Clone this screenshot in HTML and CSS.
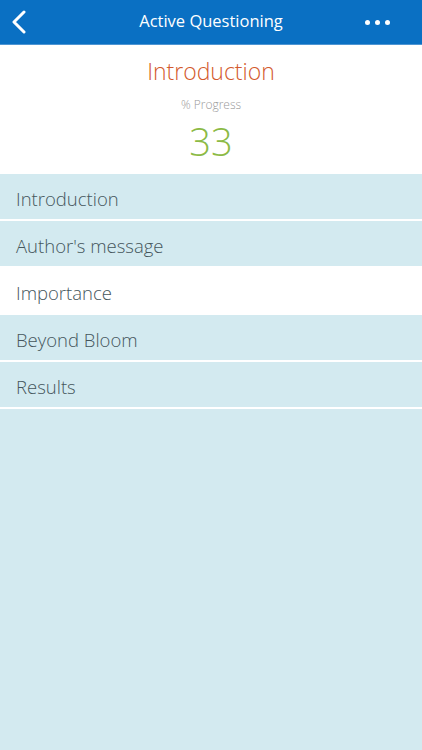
FILE: index.html
```html
<!DOCTYPE html>
<html>
<head>
<meta charset="utf-8">
<link rel="stylesheet" href="styles.css">
</head>
<body>
<div class="app">
  <header class="topbar">
    <div class="back">
      <svg width="16" height="24" viewBox="0 0 16 24"><path d="M13 2 L3 12 L13 22" fill="none" stroke="#fff" stroke-width="3" stroke-linecap="round" stroke-linejoin="round"/></svg>
    </div>
    <div class="title">Active Questioning</div>
    <div class="more"><span class="dot"></span><span class="dot"></span><span class="dot"></span></div>
  </header>
  <section class="summary">
    <div class="sum-title">Introduction</div>
    <div class="sum-label">% Progress</div>
    <div class="sum-value">33</div>
  </section>
  <ul class="list">
    <li class="item">Introduction</li>
    <li class="item">Author's message</li>
    <li class="item active">Importance</li>
    <li class="item">Beyond Bloom</li>
    <li class="item">Results</li>
  </ul>
</div>
</body>
</html>
```
FILE: styles.css
```css
* { box-sizing: border-box; }
html, body { margin: 0; padding: 0; }
body {
  width: 422px;
  height: 750px;
  background: #d3eaf0;
  font-family: "Open Sans", "Liberation Sans", sans-serif;
  overflow: hidden;
}
.app { display: flex; flex-direction: column; }
.topbar {
  height: 45px;
  background: #0a70c3;
  border-bottom: 1px solid #4e95d3;
  display: flex;
  align-items: center;
  justify-content: space-between;
  padding: 0 32px 0 11px;
  position: relative;
}
.back { display: flex; align-items: center; width: 16px; height: 24px; margin-top: -1px; }
.title {
  color: #fff;
  font-size: 16.5px;
  font-weight: 400;
  position: absolute;
  left: 0; right: 0;
  text-align: center;
  top: 9px;
  pointer-events: none;
}
.more { display: flex; gap: 5px; margin-top: 1px; }
.dot { width: 5px; height: 5px; border-radius: 50%; background: #fff; display: block; }
.summary {
  background: #fff;
  height: 129px;
  display: flex;
  flex-direction: column;
  align-items: center;
  padding-top: 10px;
}
.sum-title {
  color: #d35a2d;
  font-size: 23px;
  font-weight: 300;
  line-height: 32px;
}
.sum-label {
  color: #9a9a9a;
  font-size: 12px;
  font-weight: 300;
  line-height: 16px;
  margin-top: 10px;
}
.sum-value {
  color: #8cba45;
  font-size: 38px;
  font-weight: 300;
  line-height: 40px;
  margin-top: 8px;
}
.list { list-style: none; margin: 0; padding: 0; }
.item {
  height: 47px;
  border-bottom: 2px solid #fff;
  padding: 4px 0 0 16px;
  display: flex;
  align-items: center;
  font-size: 18.5px;
  font-weight: 300;
  color: #45565c;
  background: #d3eaf0;
}
.item.active { background: #fff; }
```
